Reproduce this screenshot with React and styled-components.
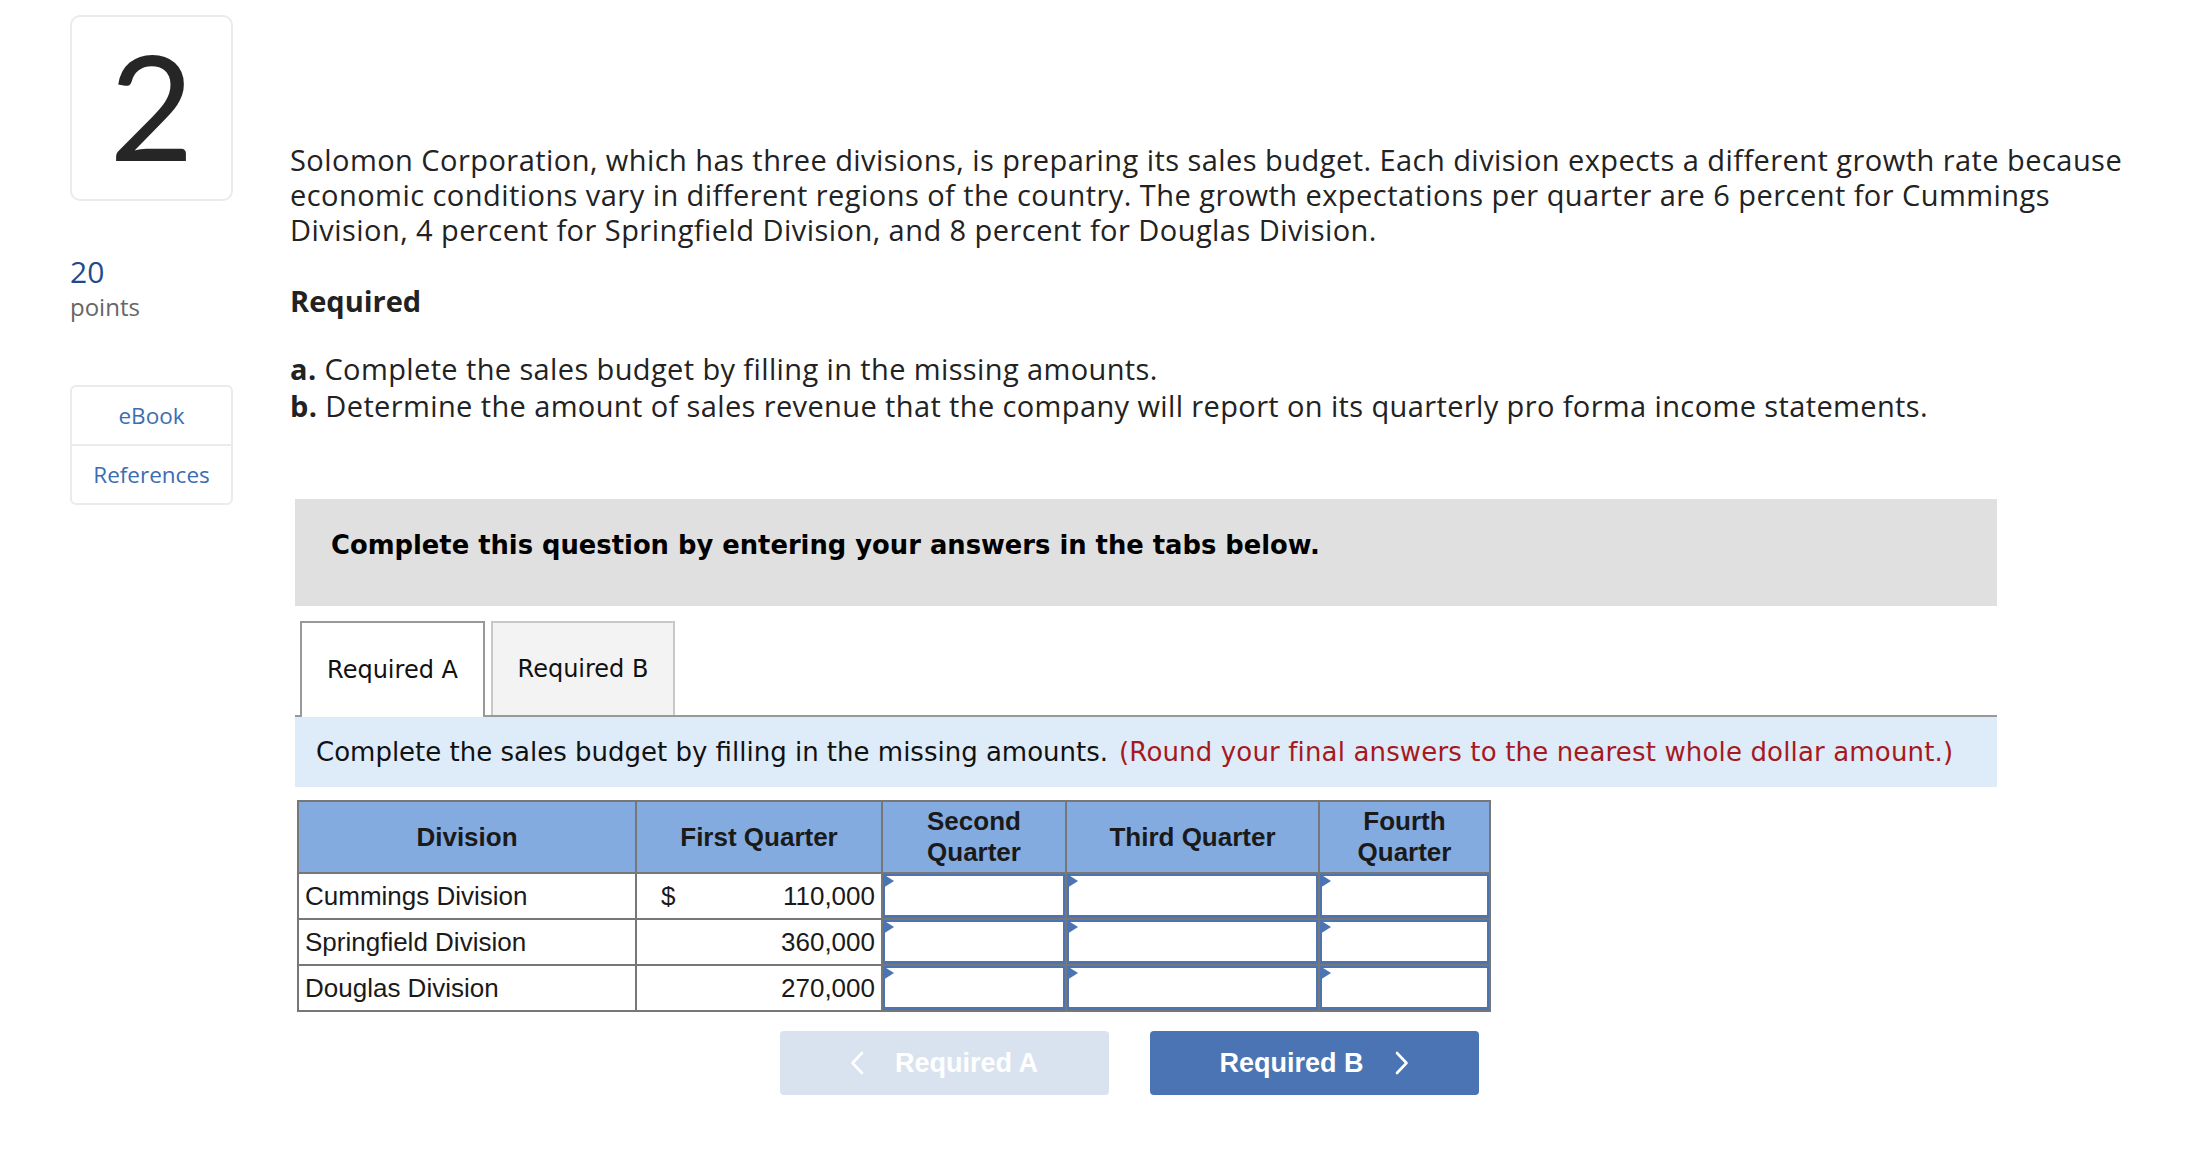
import React from 'react';
import styled, { createGlobalStyle } from 'styled-components';

const GlobalStyle = createGlobalStyle`
  body {
    margin: 0;
    background: #fff;
    font-family: "Open Sans", "Liberation Sans", Arial, sans-serif;
    color: #222;
  }
`;

const Page = styled.div`
  display: flex;
  padding: 15px 0 60px 70px;
`;

const Sidebar = styled.aside`
  width: 163px;
  flex-shrink: 0;
  display: flex;
  flex-direction: column;
`;

const NumberBox = styled.div`
  height: 186px;
  box-sizing: border-box;
  border: 2px solid #ebebeb;
  border-radius: 10px;
  display: flex;
  align-items: center;
  justify-content: center;
  font-family: "Lato", "Open Sans", sans-serif;
  font-weight: 400;
  font-size: 146px;
  color: #262626;
  line-height: 1;
  padding-bottom: 6px;
`;

const Points = styled.div`
  margin-top: 53px;
  line-height: 36px;
`;

const PointValue = styled.div`
  font-size: 30px;
  color: #1f4b8c;
`;

const PointLabel = styled.div`
  font-size: 24px;
  color: #666;
  margin-top: -1px;
`;

const LinkBox = styled.div`
  margin-top: 60px;
  border: 2px solid #ebebeb;
  border-radius: 6px;
  display: flex;
  flex-direction: column;
`;

const SideLink = styled.a`
  height: 57px;
  display: flex;
  align-items: center;
  justify-content: center;
  font-size: 22.5px;
  color: #3b6db3;
  text-decoration: none;
  & + & {
    border-top: 2px solid #ebebeb;
  }
`;

const Main = styled.main`
  margin-left: 57px;
  padding-top: 127px;
  flex: 1;
`;

const Prose = styled.p`
  margin: 0;
  font-size: 29px;
  letter-spacing: 0.45px;
  line-height: 35px;
  color: #222;
  white-space: nowrap;
`;

const Heading = styled.h3`
  margin: 36px 0 0;
  font-size: 29px;
  line-height: 35px;
  font-weight: 700;
  color: #222;
`;

const TaskList = styled.div`
  margin-top: 32px;
  font-size: 29px;
  letter-spacing: 0.38px;
  line-height: 37px;
  color: #222;
  white-space: nowrap;
`;

const Workspace = styled.section`
  margin-top: 75px;
  margin-left: 5px;
  width: 1702px;
  font-family: "DejaVu Sans", Verdana, sans-serif;
`;

const Instruction = styled.div`
  height: 107px;
  box-sizing: border-box;
  background: #e0e0e0;
  padding: 31px 36px;
  font-size: 25.8px;
  line-height: 30px;
  font-weight: 700;
  color: #000;
`;

const TabStrip = styled.div`
  margin-top: 15px;
  display: flex;
  gap: 6px;
  padding-left: 5px;
  border-bottom: 2px solid #999;
`;

const Tab = styled.button`
  width: ${p => (p.$active ? 185 : 184)}px;
  height: ${p => (p.$active ? 96 : 94)}px;
  box-sizing: border-box;
  font-family: inherit;
  font-size: 24px;
  color: #111;
  background: ${p => (p.$active ? '#fff' : '#f3f3f3')};
  border: 2px solid ${p => (p.$active ? '#999' : '#c8c8c8')};
  border-bottom: none;
  margin-bottom: ${p => (p.$active ? '-2px' : '0')};
  padding: 0;
  cursor: pointer;
`;

const Hint = styled.div`
  background: #deebf8;
  height: 70px;
  display: flex;
  align-items: center;
  padding-left: 21px;
  font-size: 26px;
  color: #111;
  white-space: nowrap;
`;

const Red = styled.span`
  color: #a6191e;
  margin-left: 11px;
  letter-spacing: 0.15px;
`;

const Budget = styled.table`
  margin: 13px 0 0 2px;
  border-collapse: collapse;
  border: 2px solid #777;
  font-family: "Liberation Sans", Arial, sans-serif;
  font-size: 26px;
  color: #1a1a1a;
`;

const Th = styled.th`
  width: ${p => p.$w}px;
  height: 70px;
  padding: 0 6px;
  background: #84abdf;
  border: 2px solid #777;
  font-weight: 700;
  line-height: 31px;
  text-align: center;
`;

const Td = styled.td`
  height: 44px;
  padding: 0 6px;
  border: 2px solid #777;
`;

const AmountCell = styled.div`
  display: flex;
  justify-content: space-between;
  padding-left: 18px;
`;

const InputTd = styled.td`
  padding: 0;
  height: 44px;
  border: 2px solid #777;
  position: relative;
`;

const Entry = styled.div`
  box-sizing: border-box;
  height: 44px;
  border: 2px solid #4a74b3;
  border-bottom-width: 3px;
  background: #fff;
`;

const Flag = styled.span`
  position: absolute;
  top: 0;
  left: 0;
  width: 0;
  height: 0;
  border-top: 7px solid transparent;
  border-bottom: 7px solid transparent;
  border-left: 11px solid #4a74b3;
`;

const Nav = styled.div`
  display: flex;
  justify-content: center;
  gap: 41px;
  margin-top: 19px;
  padding-right: 34px;
`;

const NavButton = styled.button`
  width: 329px;
  height: 64px;
  border: none;
  border-radius: 4px;
  display: flex;
  align-items: center;
  justify-content: center;
  gap: 31px;
  font-family: "Liberation Sans", Arial, sans-serif;
  font-size: 27px;
  font-weight: 700;
  color: #fff;
  background: ${p => (p.$disabled ? '#d9e3ef' : '#4a74b3')};
  cursor: ${p => (p.$disabled ? 'default' : 'pointer')};
`;

const Chevron = ({ dir }) => (
  <svg width="14" height="24" viewBox="0 0 14 24" fill="none">
    <path
      d={dir === 'left' ? 'M12 2 L2.5 12 L12 22' : 'M2 2 L11.5 12 L2 22'}
      stroke="#fff"
      strokeWidth="2.6"
      strokeLinecap="round"
      strokeLinejoin="round"
    />
  </svg>
);

const rows = [
  { name: 'Cummings Division', first: '110,000', dollar: true },
  { name: 'Springfield Division', first: '360,000' },
  { name: 'Douglas Division', first: '270,000' },
];

const InputCell = () => (
  <InputTd>
    <Entry />
    <Flag />
  </InputTd>
);

export default function App() {
  return (
    <>
      <GlobalStyle />
      <Page>
        <Sidebar>
          <NumberBox>2</NumberBox>
          <Points>
            <PointValue>20</PointValue>
            <PointLabel>points</PointLabel>
          </Points>
          <LinkBox>
            <SideLink href="#">eBook</SideLink>
            <SideLink href="#">References</SideLink>
          </LinkBox>
        </Sidebar>
        <Main>
          <Prose>
            Solomon Corporation, which has three divisions, is preparing its sales budget. Each division expects a different growth rate because
            <br />
            economic conditions vary in different regions of the country. The growth expectations per quarter are 6 percent for Cummings
            <br />
            Division, 4 percent for Springfield Division, and 8 percent for Douglas Division.
          </Prose>
          <Heading>Required</Heading>
          <TaskList>
            <div><b>a.</b> Complete the sales budget by filling in the missing amounts.</div>
            <div><b>b.</b> Determine the amount of sales revenue that the company will report on its quarterly pro forma income statements.</div>
          </TaskList>
          <Workspace>
            <Instruction>Complete this question by entering your answers in the tabs below.</Instruction>
            <TabStrip>
              <Tab $active>Required A</Tab>
              <Tab>Required B</Tab>
            </TabStrip>
            <Hint>
              Complete the sales budget by filling in the missing amounts.
              <Red>(Round your final answers to the nearest whole dollar amount.)</Red>
            </Hint>
            <Budget>
              <thead>
                <tr>
                  <Th $w={324}>Division</Th>
                  <Th $w={232}>First Quarter</Th>
                  <Th $w={170}>Second<br />Quarter</Th>
                  <Th $w={239}>Third Quarter</Th>
                  <Th $w={157}>Fourth<br />Quarter</Th>
                </tr>
              </thead>
              <tbody>
                {rows.map(r => (
                  <tr key={r.name}>
                    <Td>{r.name}</Td>
                    <Td>
                      <AmountCell>
                        <span>{r.dollar ? '$' : ''}</span>
                        <span>{r.first}</span>
                      </AmountCell>
                    </Td>
                    <InputCell />
                    <InputCell />
                    <InputCell />
                  </tr>
                ))}
              </tbody>
            </Budget>
            <Nav>
              <NavButton $disabled>
                <Chevron dir="left" />
                <span>Required A</span>
              </NavButton>
              <NavButton>
                <span>Required B</span>
                <Chevron dir="right" />
              </NavButton>
            </Nav>
          </Workspace>
        </Main>
      </Page>
    </>
  );
}
